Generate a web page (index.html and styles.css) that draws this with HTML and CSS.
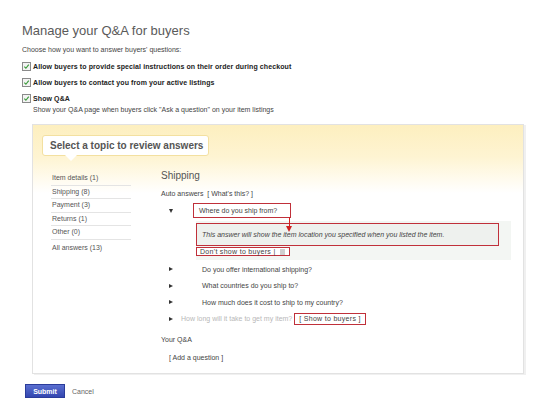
FILE: index.html
```html
<!DOCTYPE html>
<html lang="en">
<head>
    <meta charset="UTF-8">
    <meta name="viewport" content="width=device-width, initial-scale=1.0">
    <title>Manage your Q&amp;A for buyers</title>
    <link rel="stylesheet" href="styles.css">
</head>
<body>
    <div class="page">
        <h1 class="title">Manage your Q&amp;A for buyers</h1>
        <p class="intro">Choose how you want to answer buyers' questions:</p>

        <div class="option">
            <span class="check"><svg viewBox="0 0 8 8"><path d="M1.5 4.2 L3.3 6 L6.6 1.8" fill="none" stroke="#3a9a3a" stroke-width="1.3"/></svg></span>
            Allow buyers to provide special instructions on their order during checkout
        </div>
        <div class="option">
            <span class="check"><svg viewBox="0 0 8 8"><path d="M1.5 4.2 L3.3 6 L6.6 1.8" fill="none" stroke="#3a9a3a" stroke-width="1.3"/></svg></span>
            Allow buyers to contact you from your active listings
        </div>
        <div class="option">
            <span class="check"><svg viewBox="0 0 8 8"><path d="M1.5 4.2 L3.3 6 L6.6 1.8" fill="none" stroke="#3a9a3a" stroke-width="1.3"/></svg></span>
            Show Q&amp;A
        </div>
        <p class="option-note">Show your Q&amp;A page when buyers click "Ask a question" on your item listings</p>

        <div class="panel">
            <div class="bubble">Select a topic to review answers</div>

            <div class="panel-body">
                <ul class="topics">
                    <li>Item details (1)</li>
                    <li>Shipping (8)</li>
                    <li>Payment (3)</li>
                    <li>Returns (1)</li>
                    <li>Other (0)</li>
                    <li class="last">All answers (13)</li>
                </ul>

                <div class="answers">
                    <h2 class="topic-title">Shipping</h2>
                    <div class="auto">Auto answers &nbsp;[ <a href="#">What's this?</a> ]</div>

                    <div class="question open">
                        <span class="arrow down"></span>
                        <span class="mark">Where do you ship from?</span>
                        <span class="pointer"></span>
                    </div>
                    <div class="answer">
                        <div class="answer-text mark">This answer will show the item location you specified when you listed the item.</div>
                        <span class="mark small">Don't show to buyers | <span class="help"></span></span>
                    </div>

                    <div class="question"><span class="arrow"></span><span class="q">Do you offer international shipping?</span></div>
                    <div class="question"><span class="arrow"></span><span class="q">What countries do you ship to?</span></div>
                    <div class="question"><span class="arrow"></span><span class="q">How much does it cost to ship to my country?</span></div>
                    <div class="question hidden">
                        <span class="arrow"></span>
                        <span class="q faded">How long will it take to get my item?</span>
                        <span class="mark small">[ Show to buyers ]</span>
                    </div>

                    <div class="your">Your Q&amp;A</div>
                    <div class="add">[ <a href="#">Add a question</a> ]</div>
                </div>
            </div>
        </div>

        <div class="actions">
            <button type="submit" class="submit">Submit</button>
            <a href="#" class="cancel">Cancel</a>
        </div>
    </div>
</body>
</html>
```

FILE: styles.css
```css
body {
    margin: 0;
    font-family: "Liberation Sans", Arial, sans-serif;
    font-size: 7px;
    color: #444;
    background-color: #fff;
}
a {
    color: #444;
    text-decoration: none;
}
.page {
    padding: 23px 0 0 22px;
}
.title {
    margin: 0;
    font-size: 13px;
    line-height: 16px;
    font-weight: normal;
    color: #5a5a5a;
}
.intro {
    margin: 6px 0 0;
    line-height: 10px;
}
.option {
    display: flex;
    align-items: center;
    height: 10px;
    margin-top: 6px;
    font-weight: bold;
    letter-spacing: 0.1px;
    color: #222;
}
.check {
    width: 7px;
    height: 7px;
    margin-right: 2px;
    border: 1px solid #8a8a8a;
    background-color: #f3f3f3;
}
.check svg {
    display: block;
    width: 7px;
    height: 7px;
}
.option-note {
    margin: 2px 0 0 11px;
    line-height: 10px;
}

/* review panel */
.panel {
    width: 490px;
    margin: 9px 0 0 10px;
    padding: 10px 0 10px;
    border: 1px solid #e2e2e2;
    box-shadow: 2px 1px 0 #f0f0f0;
    background: linear-gradient(to bottom, #fdefbf 0, #fef4d2 32px, #fffbee 54px, #fff 68px);
}
.bubble {
    position: relative;
    display: inline-block;
    margin-left: 9px;
    padding: 0 5px 0 7px;
    height: 19px;
    line-height: 19px;
    font-size: 10px;
    font-weight: bold;
    color: #555;
    background-color: #fff;
    border: 1px solid #f3e0a0;
    border-radius: 3px;
}
.bubble::after {
    content: "";
    position: absolute;
    left: 22px;
    bottom: -6px;
    border-left: 6px solid transparent;
    border-right: 6px solid transparent;
    border-top: 6px solid #fff;
}
.panel-body {
    display: flex;
    margin-top: 8px;
}
.topics {
    list-style: none;
    width: 80px;
    margin: 8px 0 0 18px;
    padding: 0;
}
.topics li {
    height: 12.5px;
    line-height: 12px;
    padding-left: 1px;
    border-bottom: 1px solid #e4e4e4;
    color: #555;
}
.topics li.last {
    border-bottom: none;
    line-height: 16px;
}
.answers {
    flex: 1;
    margin: 5px 0 0 30px;
}
.topic-title {
    margin: 0;
    font-size: 10px;
    line-height: 14px;
    font-weight: normal;
    color: #555;
}
.auto {
    margin-top: 6px;
    line-height: 10px;
}
.question {
    position: relative;
    display: flex;
    align-items: center;
    height: 16.5px;
}
.question.open {
    height: 15px;
    margin-top: 4px;
}
.arrow {
    width: 0;
    height: 0;
    margin: 0 28px 0 8px;
    border-top: 2.5px solid transparent;
    border-bottom: 2.5px solid transparent;
    border-left: 4px solid #333;
}
.arrow.down {
    margin: 0 20px 0 8px;
    border-left: 2.5px solid transparent;
    border-right: 2.5px solid transparent;
    border-top: 4px solid #333;
    border-bottom: none;
}
.mark {
    border: 1px solid #c0303a;
    padding: 0 13px 0 5px;
    line-height: 13px;
    color: #444;
    background-color: #fff;
}
.mark.small {
    padding: 0 3px;
    line-height: 10px;
}
.pointer {
    position: absolute;
    left: 128px;
    top: 14px;
    width: 1px;
    height: 11px;
    background-color: #d02020;
}
.pointer::after {
    content: "";
    position: absolute;
    left: -3px;
    bottom: -4px;
    border-left: 3.5px solid transparent;
    border-right: 3.5px solid transparent;
    border-top: 6px solid #d02020;
}
.answer {
    margin: 3px 12px 1px 35px;
    padding: 2px 0 3px;
    background-color: #f3f6f3;
}
.answer-text {
    width: 296px;
    height: 21px;
    line-height: 21px;
    padding: 0 0 0 5px;
    font-style: italic;
    background-color: #eef1ee;
    margin-bottom: 1px;
}
.answer .mark.small {
    padding: 0 4px 0 3px;
    letter-spacing: 0.3px;
}
.help {
    display: inline-block;
    width: 5px;
    height: 6px;
    margin-left: 2px;
    vertical-align: -1px;
    background-color: #cfcfcf;
}
.q {
    margin-left: 1px;
}
.question.hidden .arrow {
    margin-right: 7px;
}
.faded {
    color: #b8b8b8;
}
.question.hidden .mark {
    margin-left: 2px;
    padding: 0 4px;
    letter-spacing: 0.3px;
}
.your {
    margin-top: 8px;
    line-height: 10px;
}
.add {
    margin: 8px 0 0 8px;
    line-height: 10px;
}
.actions {
    display: flex;
    align-items: center;
    margin: 10px 0 0 3px;
}
.submit {
    height: 14px;
    width: 40px;
    padding: 0;
    font-family: inherit;
    font-size: 7px;
    font-weight: bold;
    color: #fff;
    border: 1px solid #2b3c9a;
    background: linear-gradient(to bottom, #5a6fd0, #3346b0);
    cursor: pointer;
}
.cancel {
    margin-left: 7px;
    color: #666;
}
```
